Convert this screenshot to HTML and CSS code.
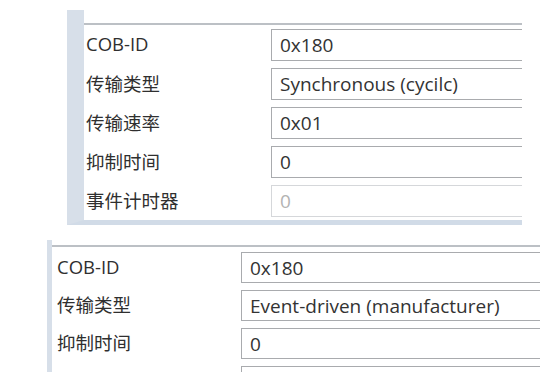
FILE: index.html
```html
<!DOCTYPE html>
<html lang="zh">
<head>
<meta charset="utf-8">
<title>PDO 参数</title>
<link rel="stylesheet" href="styles.css">
</head>
<body>
<main class="page">
  <section class="panel panel-a">
    <div class="frame">
      <div class="row"><span class="label">COB-ID</span><span class="field">0x180</span></div>
      <div class="row"><span class="label">传输类型</span><span class="field">Synchronous (cycilc)</span></div>
      <div class="row"><span class="label">传输速率</span><span class="field">0x01</span></div>
      <div class="row"><span class="label">抑制时间</span><span class="field">0</span></div>
      <div class="row"><span class="label">事件计时器</span><span class="field disabled">0</span></div>
    </div>
  </section>
  <section class="panel panel-b">
    <div class="frame">
      <div class="row"><span class="label">COB-ID</span><span class="field">0x180</span></div>
      <div class="row"><span class="label">传输类型</span><span class="field">Event-driven (manufacturer)</span></div>
      <div class="row"><span class="label">抑制时间</span><span class="field">0</span></div>
      <div class="row"><span class="label">事件计时器</span><span class="field">0</span></div>
    </div>
  </section>
</main>
</body>
</html>
```
FILE: styles.css
```css
html, body {
  margin: 0;
  padding: 0;
  background: #ffffff;
  height: 372px;
  overflow: hidden;
}
body {
  font-family: "Open Sans", "Noto Sans CJK SC", sans-serif;
  color: #333333;
}
.page {
  display: flex;
  flex-direction: column;
  gap: 15px;
  padding-top: 10px;
}
.panel {
  overflow: hidden;
  box-sizing: border-box;
}
.panel-a {
  margin-left: 67px;
  width: 455px;
  height: 215px;
  border-left: 17px solid #d7dfe9;
  border-bottom: 5px solid #d1dbe7;
  padding-top: 13px;
}
.panel-b {
  margin-left: 47px;
  width: 493px;
  height: 140px;
  border-left: 5px solid #d7dfe9;
  padding-top: 5px;
}
.frame {
  border-top: 2px solid #bcc0c5;
  display: flex;
  flex-direction: column;
}
.panel-a .frame {
  padding-top: 4px;
  gap: 7px;
}
.panel-b .frame {
  padding-top: 5px;
  gap: 7px;
}
.row {
  display: flex;
  align-items: center;
}
.panel-a .row { height: 32px; }
.panel-b .row { height: 31px; }
.label {
  font-size: 18.5px;
  color: #2f2f2f;
  flex: none;
  margin-top: -3px;
}
.panel-a .label { width: 185px; padding-left: 2px; }
.panel-b .label { width: 184px; padding-left: 5px; }
.field {
  flex: 1;
  align-self: stretch;
  display: flex;
  align-items: center;
  box-sizing: border-box;
  border: 1px solid #a9abae;
  border-right: 0;
  padding-left: 8px;
  font-size: 19px;
  color: #333333;
  background: #ffffff;
}
.field.disabled {
  border-color: #d5d7da;
  color: #b3b3b3;
}
```
